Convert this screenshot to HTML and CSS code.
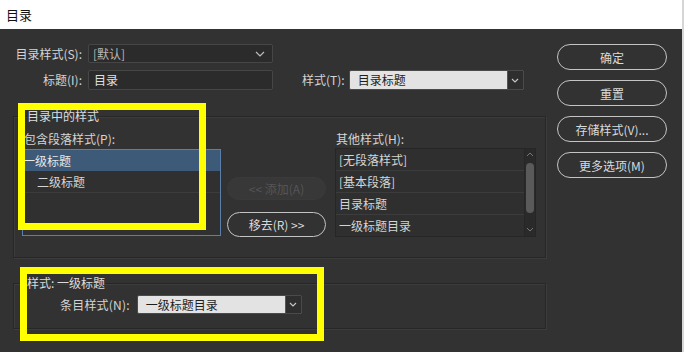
FILE: index.html
```html
<!DOCTYPE html>
<html lang="zh-CN">
<head>
  <meta charset="UTF-8">
  <title>目录</title>
  <link rel="stylesheet" href="styles.css">
</head>
<body>
  <div class="window">
    <div class="titlebar">目录</div>

    <div class="dialog">
      <div class="main">
        <div class="row">
          <label class="row-label">目录样式(S):</label>
          <div class="select dark-select">
            <span>[默认]</span>
            <svg class="chev" width="10" height="6" viewBox="0 0 10 6"><polyline points="1,1 5,5 9,1" fill="none" stroke="#bdbdbd" stroke-width="1.2"/></svg>
          </div>
        </div>

        <div class="row row-second">
          <label class="row-label">标题(I):</label>
          <div class="input">目录</div>
          <label class="style-label">样式(T):</label>
          <div class="select light-select wide">
            <span class="value">目录标题</span>
            <span class="drop-btn">
              <svg width="8" height="5" viewBox="0 0 8 5"><polyline points="1,1 4,4 7,1" fill="none" stroke="#c8c8c8" stroke-width="1.1"/></svg>
            </span>
          </div>
        </div>

        <fieldset class="group group-styles">
          <legend>目录中的样式</legend>
          <div class="columns">
            <div class="col">
              <div class="col-label">包含段落样式(P):</div>
              <ul class="list list-included">
                <li class="selected">一级标题</li>
                <li class="indent">二级标题</li>
              </ul>
            </div>

            <div class="col-buttons">
              <button class="pill disabled">&lt;&lt; 添加(A)</button>
              <button class="pill">移去(R) &gt;&gt;</button>
            </div>

            <div class="col col-right">
              <div class="col-label">其他样式(H):</div>
              <div class="list-wrap">
                <ul class="list list-other">
                  <li>[无段落样式]</li>
                  <li>[基本段落]</li>
                  <li>目录标题</li>
                  <li>一级标题目录</li>
                </ul>
                <div class="scrollbar">
                  <svg width="8" height="5" viewBox="0 0 8 5"><polyline points="1,4 4,1 7,4" fill="none" stroke="#777" stroke-width="1"/></svg>
                  <div class="thumb"></div>
                  <svg width="8" height="5" viewBox="0 0 8 5"><polyline points="1,1 4,4 7,1" fill="none" stroke="#777" stroke-width="1"/></svg>
                </div>
              </div>
            </div>
          </div>
        </fieldset>

        <fieldset class="group group-entry">
          <legend>样式: 一级标题</legend>
          <div class="row entry-row">
            <label class="entry-label">条目样式(N):</label>
            <div class="select light-select entry-select">
              <span class="value">一级标题目录</span>
              <span class="drop-btn">
                <svg width="8" height="5" viewBox="0 0 8 5"><polyline points="1,1 4,4 7,1" fill="none" stroke="#c8c8c8" stroke-width="1.1"/></svg>
              </span>
            </div>
          </div>
        </fieldset>
      </div>

      <div class="actions">
        <button class="pill action">确定</button>
        <button class="pill action">重置</button>
        <button class="pill action">存储样式(V)...</button>
        <button class="pill action">更多选项(M)</button>
      </div>
    </div>

    <!-- annotation highlights over the dialog -->
    <div class="highlight hl-list"></div>
    <div class="highlight hl-entry"></div>
  </div>
</body>
</html>
```

FILE: styles.css
```css
* {
  box-sizing: border-box;
}

body {
  margin: 0;
  font-family: "Noto Sans CJK SC", "Noto Sans", sans-serif;
  font-size: 12px;
  line-height: 14px;
  color: #d4d4d4;
  background-color: #323232;
}

.window {
  position: relative;
  width: 684px;
  height: 352px;
  overflow: hidden;
  border-right: 2px solid #d6d6d6;
  background-color: #323232;
}

.titlebar {
  height: 29px;
  padding: 7px 0 0 6px;
  background-color: #ffffff;
  color: #111;
  font-size: 13px;
  line-height: 16px;
}

.dialog {
  display: flex;
}

.main {
  width: 546px;
  padding: 15px 0 0 13px;
}

.row {
  display: flex;
  align-items: center;
}

.row-label {
  width: 69px;
  margin-right: 6px;
  text-align: right;
  white-space: nowrap;
}

.row-second {
  margin-top: 7px;
}

.select,
.input {
  display: flex;
  align-items: center;
  height: 19px;
  border: 1px solid #464646;
  border-radius: 2px;
  background-color: #2b2b2b;
}

.dark-select {
  width: 185px;
  padding: 0 7px 0 4px;
  justify-content: space-between;
  color: #b8b8b8;
}

.input {
  width: 185px;
  height: 20px;
  padding-left: 5px;
  color: #e0e0e0;
}

.style-label {
  margin: 0 4px 0 29px;
  white-space: nowrap;
}

.light-select {
  padding: 0;
  border-color: #4a4a4a;
  background-color: #e3e3e3;
}

.light-select .value {
  flex: 1;
  padding-left: 8px;
  color: #1e1e1e;
}

.drop-btn {
  display: flex;
  align-items: center;
  justify-content: center;
  width: 16px;
  height: 100%;
  border-left: 1px solid #555;
  background-color: #2e2e2e;
}

.wide {
  width: 175px;
  height: 20px;
}

.group {
  margin: 19px 0 0 0;
  padding: 9px 8px 20px 8px;
  border: 1px solid #272727;
  box-shadow: inset 1px 1px 0 #3c3c3c, 1px 1px 0 #3c3c3c;
  min-width: 0;
}

.group legend {
  margin-left: 5px;
  padding: 0;
  color: #dcdcdc;
}

.columns {
  display: flex;
}

.col {
  width: 199px;
}

.col-label {
  margin: 0 0 3px 2px;
  white-space: nowrap;
}

.list {
  margin: 0;
  padding: 0;
  list-style: none;
}

.list li {
  height: 22px;
  line-height: 21px;
  border-bottom: 1px solid #3c3c3c;
  white-space: nowrap;
}

.list-included {
  height: 87px;
  border: 1px solid #5a7fa8;
  background-color: #303030;
}

.list-included .selected {
  height: 21px;
  background-color: #3d5a79;
  color: #e8e8e8;
  border-bottom-color: #3d5a79;
}

.list-included .indent {
  padding-left: 14px;
}

.col-buttons {
  display: flex;
  flex-direction: column;
  gap: 12px;
  width: 99px;
  margin-left: 6px;
  padding-top: 45px;
}

.pill {
  height: 25px;
  padding: 0;
  border: 1.5px solid #c4c4c4;
  border-radius: 13px;
  background: transparent;
  color: #dadada;
  font-family: inherit;
  font-size: 12px;
}

.pill.disabled {
  height: 23px;
  border-color: #3a3a3a;
  background-color: #383838;
  color: #555;
}

.col-right {
  width: 201px;
  margin-left: 9px;
}

.col-right .col-label {
  margin-left: 1px;
  margin-bottom: 2px;
}

.list-wrap {
  display: flex;
  height: 89px;
  border: 1px solid #262626;
  background-color: #2f2f2f;
}

.list-other {
  flex: 1;
}

.list-other li {
  padding-left: 3px;
}

.list-other li:last-child {
  border-bottom: none;
}

.scrollbar {
  display: flex;
  flex-direction: column;
  align-items: center;
  justify-content: space-between;
  width: 11px;
  padding: 3px 0 4px 0;
  border-left: 1px solid #262626;
  background-color: #2a2a2a;
}

.thumb {
  width: 8px;
  height: 50px;
  margin-bottom: 8px;
  border-radius: 4px;
  background-color: #5a5a5a;
}

.group-entry {
  margin-top: 18px;
  padding: 5px 8px 14px 8px;
}

.entry-row {
  padding-left: 38px;
}

.entry-label {
  margin-right: 7px;
  white-space: nowrap;
  letter-spacing: 0.2px;
}

.entry-select {
  width: 165px;
}

.actions {
  display: flex;
  flex-direction: column;
  gap: 10px;
  padding: 15px 0 0 11px;
}

.pill.action {
  width: 110px;
  height: 26px;
}

.highlight {
  position: absolute;
  border: 7px solid #ffff00;
  pointer-events: none;
}

.hl-list {
  left: 18px;
  top: 103px;
  width: 188px;
  height: 127px;
}

.hl-entry {
  left: 20px;
  top: 267px;
  width: 304px;
  height: 74px;
}
```
